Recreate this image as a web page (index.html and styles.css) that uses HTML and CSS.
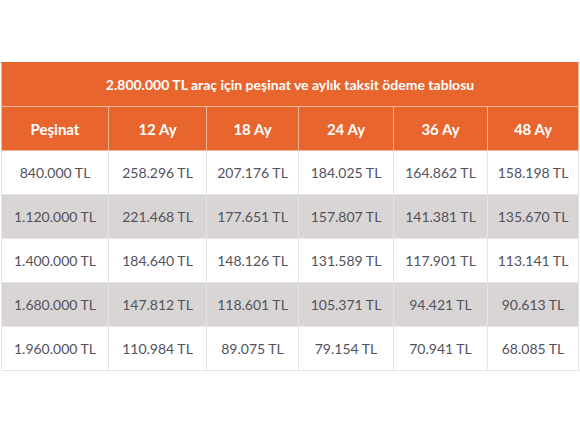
FILE: index.html
```html
<!DOCTYPE html>
<html lang="tr">
<head>
  <meta charset="UTF-8">
  <meta name="viewport" content="width=device-width, initial-scale=1.0">
  <title>Peşinat ve aylık taksit tablosu</title>
  <link rel="stylesheet" href="styles.css">
</head>
<body>
  <table class="plan">
    <colgroup>
      <col class="c1"><col class="c2"><col class="c3"><col class="c4"><col class="c5"><col class="c6">
    </colgroup>
    <thead>
      <tr class="title-row">
        <th colspan="6">2.800.000 TL araç için peşinat ve aylık taksit ödeme tablosu</th>
      </tr>
      <tr class="head-row">
        <th>Peşinat</th>
        <th>12 Ay</th>
        <th>18 Ay</th>
        <th>24 Ay</th>
        <th>36 Ay</th>
        <th>48 Ay</th>
      </tr>
    </thead>
    <tbody>
      <tr>
        <td>840.000 TL</td><td>258.296 TL</td><td>207.176 TL</td><td>184.025 TL</td><td>164.862 TL</td><td>158.198 TL</td>
      </tr>
      <tr class="alt">
        <td>1.120.000 TL</td><td>221.468 TL</td><td>177.651 TL</td><td>157.807 TL</td><td>141.381 TL</td><td>135.670 TL</td>
      </tr>
      <tr>
        <td>1.400.000 TL</td><td>184.640 TL</td><td>148.126 TL</td><td>131.589 TL</td><td>117.901 TL</td><td>113.141 TL</td>
      </tr>
      <tr class="alt">
        <td>1.680.000 TL</td><td>147.812 TL</td><td>118.601 TL</td><td>105.371 TL</td><td>94.421 TL</td><td>90.613 TL</td>
      </tr>
      <tr>
        <td>1.960.000 TL</td><td>110.984 TL</td><td>89.075 TL</td><td>79.154 TL</td><td>70.941 TL</td><td>68.085 TL</td>
      </tr>
    </tbody>
  </table>
</body>
</html>
```

FILE: styles.css
```css
body {
  margin: 0;
  background-color: #fff;
  font-family: Lato, "Open Sans", sans-serif;
}
.plan {
  margin: 62px 0 0 1px;
  width: 577px;
  border-collapse: collapse;
  table-layout: fixed;
}
.c1 { width: 107px; }
.c2 { width: 98px; }
.c3 { width: 92px; }
.c4 { width: 95px; }
.c5 { width: 94px; }
.c6 { width: 91px; }
th, td {
  height: 44px;
  padding: 0;
  text-align: center;
  box-sizing: border-box;
}
th {
  background-color: #e8652e;
  color: #fff;
  font-weight: bold;
  border: 1px solid #f3b896;
}
.title-row th {
  font-size: 14px;
  border-top-color: #e8652e;
}
.head-row th {
  font-size: 15px;
}
td {
  font-size: 14px;
  color: #52525e;
  border: 1px solid #e4e4e4;
}
.alt td {
  background-color: #d9d5d4;
}
```
